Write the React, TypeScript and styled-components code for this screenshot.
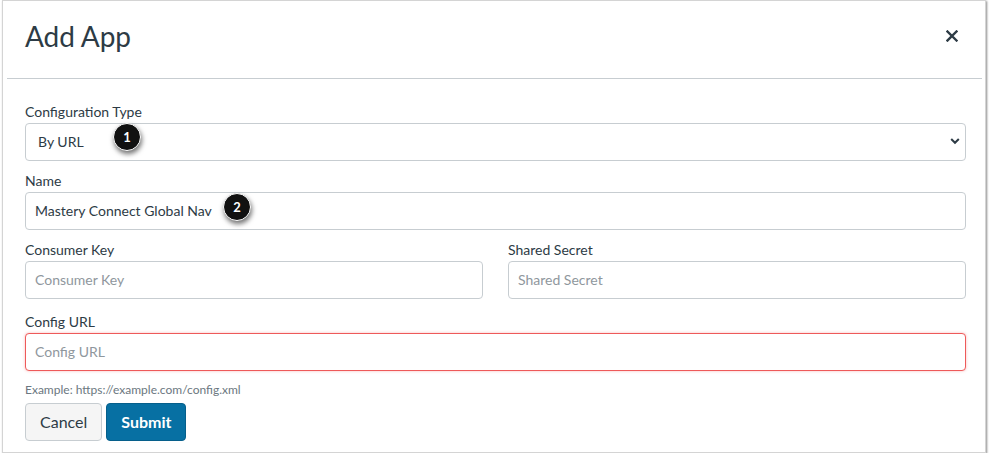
import React from "react";
import styled, { createGlobalStyle } from "styled-components";

const GlobalStyle = createGlobalStyle`
  html, body {
    margin: 0;
    padding: 0;
    background: #ffffff;
  }
  body {
    font-family: Lato, "Open Sans", "Liberation Sans", sans-serif;
    color: #2d3b45;
  }
  * {
    box-sizing: border-box;
  }
`;

const Frame = styled.div`
  margin-left: 2px;
  width: 984px;
  height: 453px;
  border: 1px solid #d4d4d4;
  box-shadow: 1px 1px 2px rgba(0, 0, 0, 0.45);
  background: #fff;
`;

const Header = styled.div`
  margin: 0 3px 0 4px;
  height: 78px;
  border-bottom: 1px solid #c7cdd1;
  display: flex;
  align-items: center;
  justify-content: space-between;
  padding: 0 24px 7px 18px;
`;

const Title = styled.h1`
  margin: 0;
  font-size: 28px;
  font-weight: 400;
  color: #2d3b45;
  letter-spacing: -0.1px;
`;

const CloseButton = styled.button`
  border: none;
  background: none;
  padding: 0;
  width: 12px;
  height: 12px;
  display: flex;
  align-items: center;
  justify-content: center;
  cursor: pointer;
`;

const Body = styled.div`
  padding: 23px 19px 0 22px;
`;

const Field = styled.div<{ $gap?: number }>`
  margin-bottom: ${(p) => (p.$gap ?? 10)}px;
`;

const Label = styled.label`
  display: block;
  font-size: 14px;
  line-height: 20px;
  margin-bottom: 1px;
  color: #2d3b45;
`;

const Row = styled.div`
  display: grid;
  grid-template-columns: 1fr 1fr;
  gap: 25px;
  margin-bottom: 13px;
`;

const Control = styled.div`
  position: relative;
`;

const TextInput = styled.input<{ $error?: boolean }>`
  display: block;
  width: 100%;
  height: 38px;
  border: 1px solid ${(p) => (p.$error ? "#ee5a5a" : "#c7cdd1")};
  box-shadow: ${(p) => (p.$error ? "0 0 3px rgba(238, 60, 60, 0.35)" : "none")};
  border-radius: 4px;
  padding: 0 9px 2px;
  font-family: inherit;
  font-size: 14px;
  color: #2d3b45;
  background: #fff;
  outline: none;

  &::placeholder {
    color: #8f979d;
  }
`;

const Select = styled.select`
  display: block;
  width: 100%;
  height: 38px;
  border: 1px solid #c7cdd1;
  border-radius: 4px;
  padding: 0 12px 2px;
  font-family: inherit;
  font-size: 14px;
  color: #2d3b45;
  background: #fff;
  appearance: none;
  outline: none;
`;

const Chevron = styled.svg`
  position: absolute;
  right: 6px;
  top: 14px;
  pointer-events: none;
`;

const Badge = styled.span<{ $left: number; $top: number }>`
  position: absolute;
  left: ${(p) => p.$left}px;
  top: ${(p) => p.$top}px;
  width: 28px;
  height: 28px;
  border-radius: 50%;
  background: #111;
  color: #fff;
  font-size: 13px;
  font-weight: 700;
  display: flex;
  align-items: center;
  justify-content: center;
  box-shadow: 1px 3px 5px rgba(0, 0, 0, 0.55);
  border: 1px solid #fff;
`;

const Hint = styled.div`
  font-size: 12px;
  line-height: 18px;
  color: #6b7780;
  margin-top: 10px;
`;

const Actions = styled.div`
  display: flex;
  gap: 4px;
  margin-top: 4px;
`;

const Button = styled.button<{ $primary?: boolean }>`
  height: 38px;
  padding: 0 14px 2px;
  border-radius: 4px;
  font-family: inherit;
  font-size: 16px;
  font-weight: ${(p) => (p.$primary ? 700 : 400)};
  color: ${(p) => (p.$primary ? "#fff" : "#2d3b45")};
  background: ${(p) => (p.$primary ? "#0770a3" : "#f5f5f5")};
  border: 1px solid ${(p) => (p.$primary ? "#065f8b" : "#c7cdd1")};
  cursor: pointer;
`;

const CloseIcon = () => (
  <svg width="12" height="12" viewBox="0 0 12 12">
    <path d="M1.5 1.5 L10.5 10.5 M10.5 1.5 L1.5 10.5" stroke="#2d3b45" strokeWidth="2.4" strokeLinecap="square" />
  </svg>
);

export default function App() {
  return (
    <>
      <GlobalStyle />
      <Frame>
        <Header>
          <Title>Add App</Title>
          <CloseButton aria-label="Close">
            <CloseIcon />
          </CloseButton>
        </Header>
        <Body>
          <Field>
            <Label>Configuration Type</Label>
            <Control>
              <Select defaultValue="url">
                <option value="manual">Manual Entry</option>
                <option value="url">By URL</option>
                <option value="xml">Paste XML</option>
              </Select>
              <Chevron width="10" height="8" viewBox="0 0 10 8">
                <path d="M1.2 2 L5 5.8 L8.8 2" fill="none" stroke="#2d3b45" strokeWidth="2" />
              </Chevron>
              <Badge $left={88} $top={0}>1</Badge>
            </Control>
          </Field>
          <Field>
            <Label>Name</Label>
            <Control>
              <TextInput defaultValue="Mastery Connect Global Nav" />
              <Badge $left={198} $top={1}>2</Badge>
            </Control>
          </Field>
          <Row>
            <div>
              <Label>Consumer Key</Label>
              <TextInput placeholder="Consumer Key" />
            </div>
            <div>
              <Label>Shared Secret</Label>
              <TextInput placeholder="Shared Secret" />
            </div>
          </Row>
          <Field $gap={0}>
            <Label>Config URL</Label>
            <TextInput $error placeholder="Config URL" />
          </Field>
          <Hint>Example: https://example.com/config.xml</Hint>
          <Actions>
            <Button>Cancel</Button>
            <Button $primary>Submit</Button>
          </Actions>
        </Body>
      </Frame>
    </>
  );
}
